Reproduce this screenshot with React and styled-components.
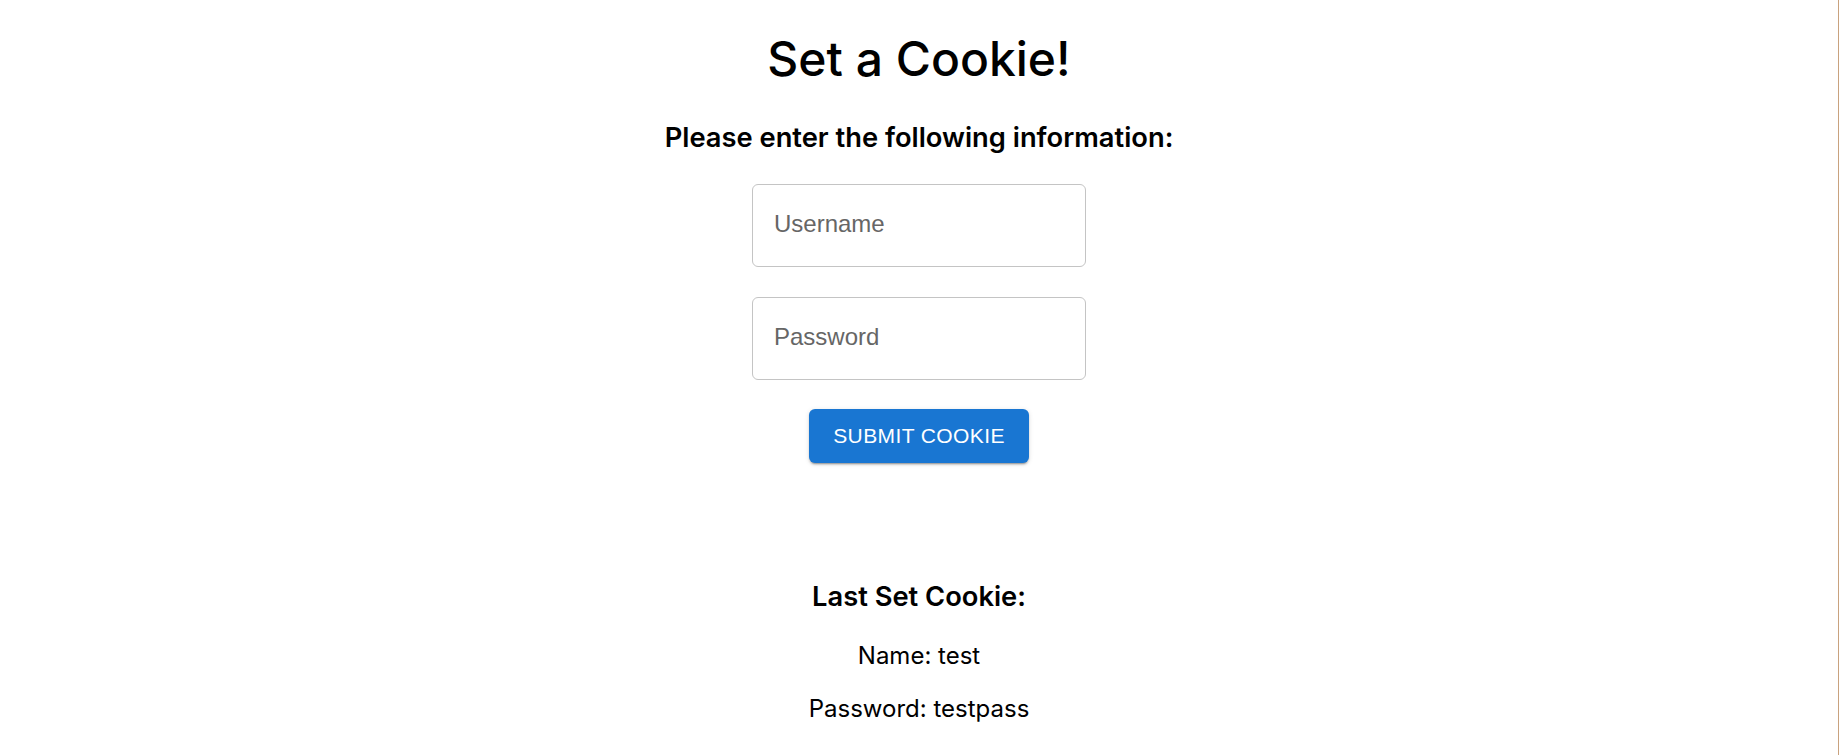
import React from "react";
import styled, { createGlobalStyle } from "styled-components";

const GlobalStyle = createGlobalStyle`
  html, body {
    margin: 0;
    padding: 0;
    background: #ffffff;
  }
  body {
    font-family: Inter, "Liberation Sans", sans-serif;
    color: #000000;
  }
  * { box-sizing: border-box; }
`;

const Page = styled.main`
  min-height: 100vh;
  border-right: 1px solid #c9a27e;
  display: flex;
  flex-direction: column;
  align-items: center;
  padding-top: 29px;
`;

const Title = styled.h1`
  margin: 0;
  font-family: Inter, sans-serif;
  font-size: 48px;
  line-height: 60px;
  font-weight: 500;
`;

const Heading = styled.h2`
  margin: ${(p) => p.$top}px 0 0;
  font-family: Inter, sans-serif;
  font-size: 27.3px;
  line-height: 32px;
  font-weight: 600;
`;

const Form = styled.form`
  margin-top: 30px;
  display: flex;
  flex-direction: column;
  align-items: center;
  gap: 30px;
`;

const Field = styled.input`
  width: 334px;
  height: 83px;
  border: 1px solid #c4c4c4;
  border-radius: 6px;
  padding: 0 21px 4px;
  font-family: "Liberation Sans", Arial, sans-serif;
  font-size: 24px;
  color: #000;
  background: #fff;
  outline: none;
  &::placeholder {
    color: #666666;
    opacity: 1;
  }
`;

const SubmitButton = styled.button`
  height: 54px;
  margin-top: -1px;
  padding: 0 24px;
  border: none;
  border-radius: 6px;
  background: #1976d2;
  color: #ffffff;
  font-family: "Liberation Sans", Arial, sans-serif;
  font-size: 21px;
  font-weight: 400;
  letter-spacing: 0.4px;
  text-transform: uppercase;
  cursor: pointer;
  box-shadow: 0px 3px 1px -2px rgba(0, 0, 0, 0.2),
    0px 2px 2px 0px rgba(0, 0, 0, 0.14), 0px 1px 5px 0px rgba(0, 0, 0, 0.12);
`;

const Info = styled.p`
  margin: ${(p) => p.$top}px 0 0;
  font-family: Inter, sans-serif;
  font-size: 24px;
  line-height: 28px;
  font-weight: 400;
`;

export default function App() {
  return (
    <>
      <GlobalStyle />
      <Page>
        <Title>Set a Cookie!</Title>
        <Heading $top={33}>Please enter the following information:</Heading>
        <Form onSubmit={(e) => e.preventDefault()}>
          <Field type="text" placeholder="Username" />
          <Field type="password" placeholder="Password" />
          <SubmitButton type="submit">Submit Cookie</SubmitButton>
        </Form>
        <Heading $top={118}>Last Set Cookie:</Heading>
        <Info $top={29}>Name: test</Info>
        <Info $top={25}>Password: testpass</Info>
      </Page>
    </>
  );
}
